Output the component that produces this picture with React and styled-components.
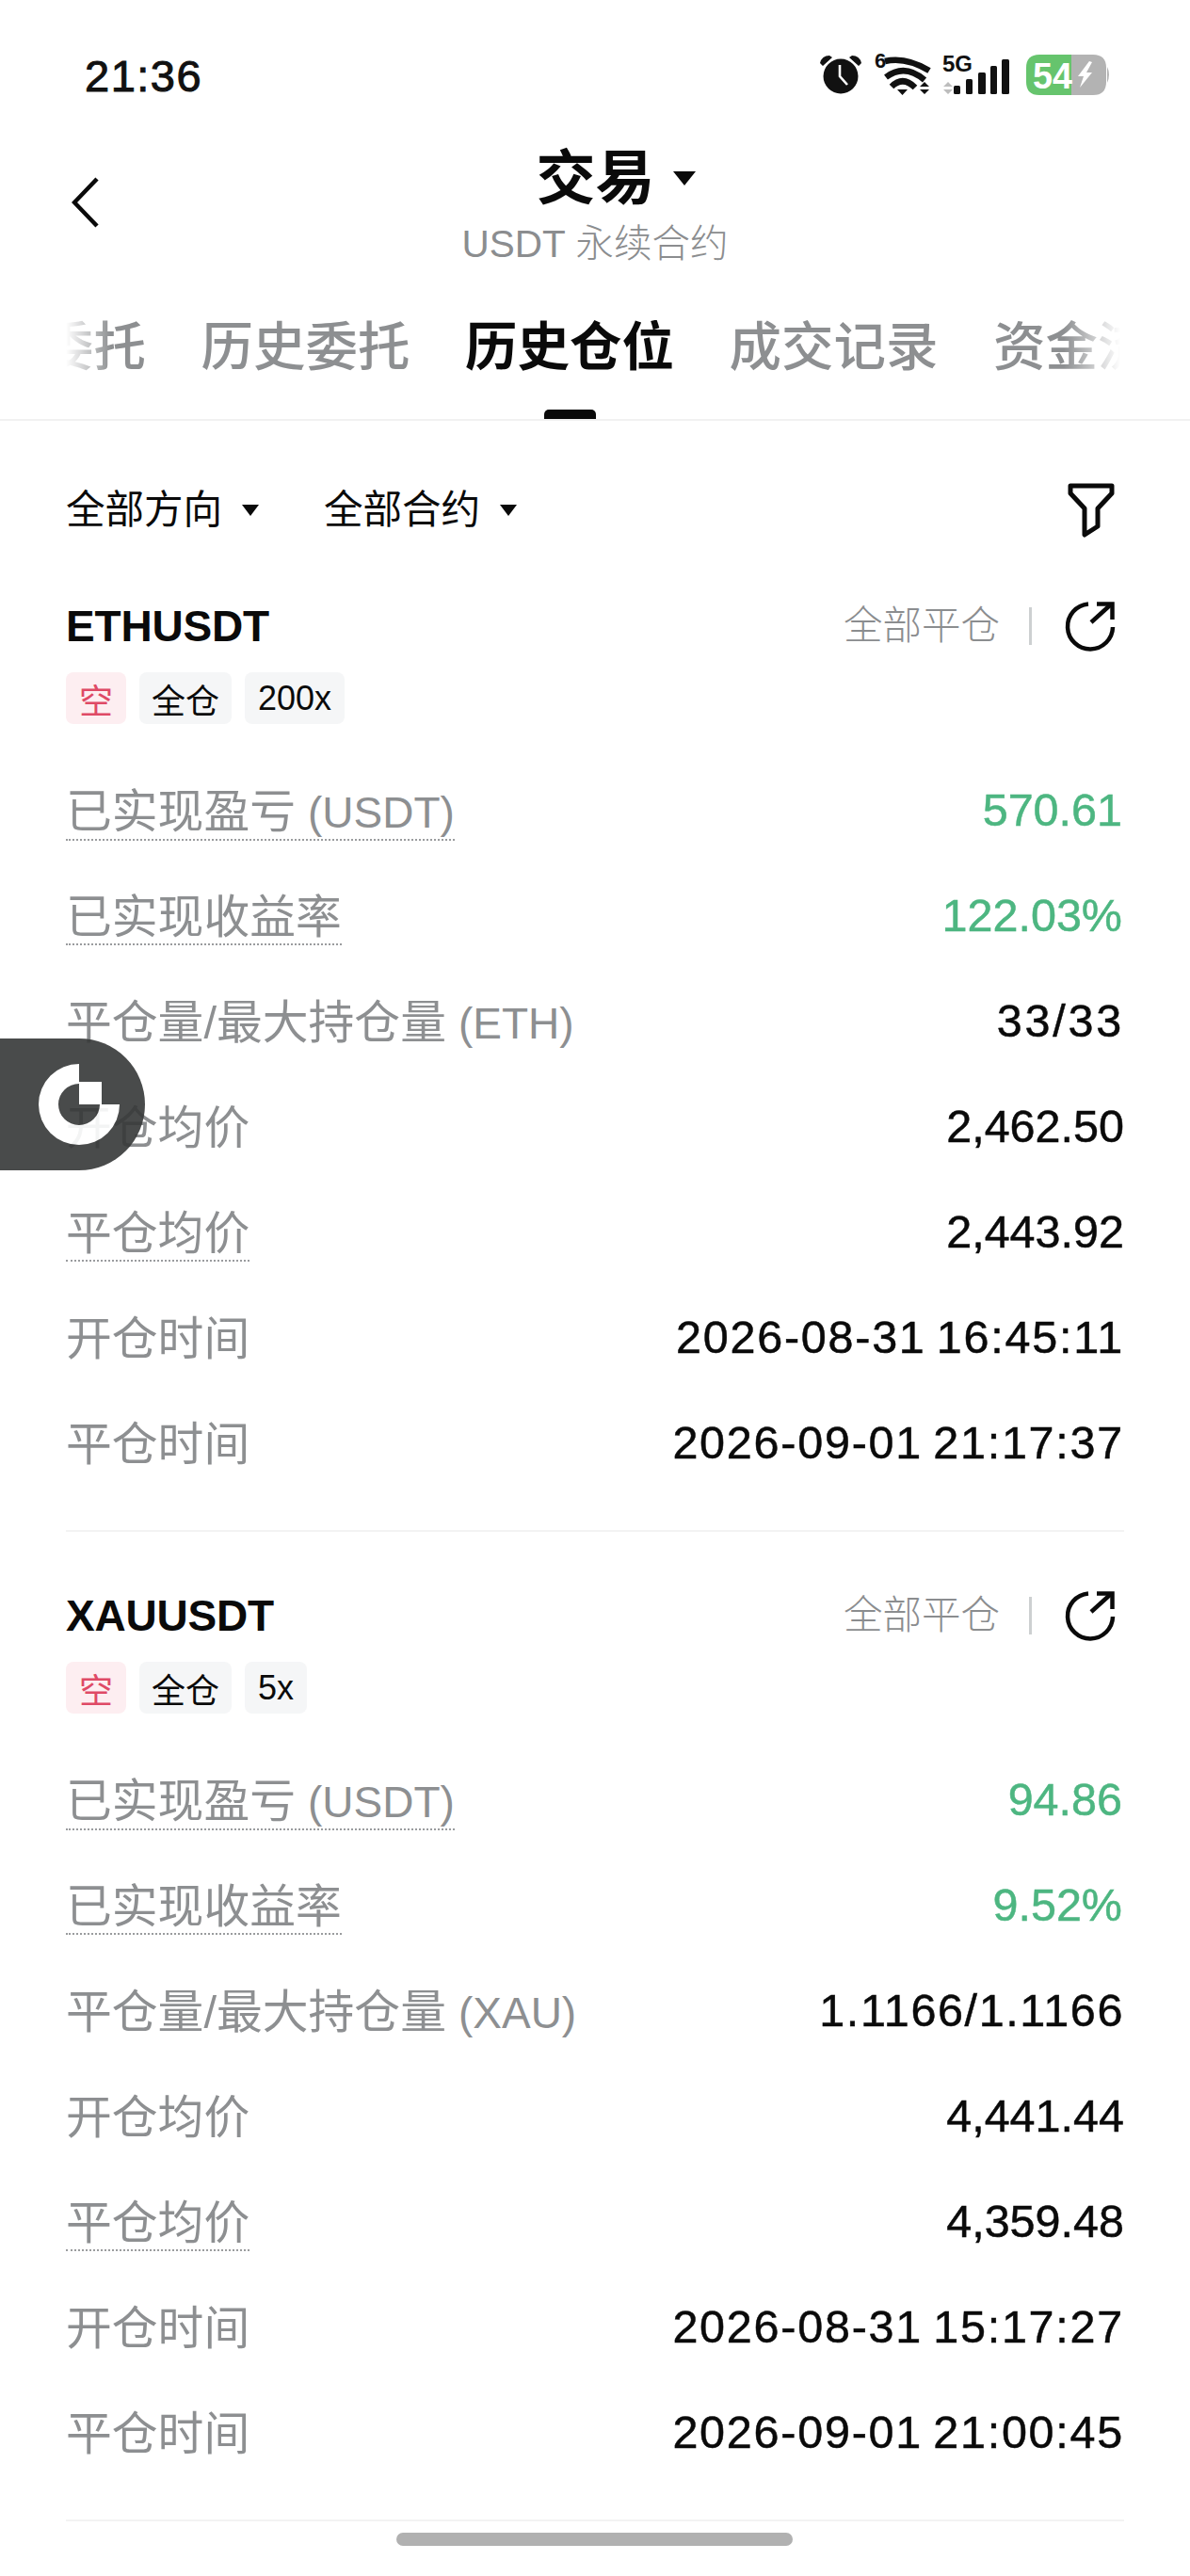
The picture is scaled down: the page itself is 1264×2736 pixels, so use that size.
import React from "react";
import styled, { createGlobalStyle } from "styled-components";

const Global = createGlobalStyle`
  html, body { margin: 0; padding: 0; background: #fff; }
  * { box-sizing: border-box; }
`;
const SANS = `"Liberation Sans", "Noto Sans CJK SC", sans-serif`;

const Page = styled.div`
  position: relative; width: 1264px; height: 2736px; overflow: hidden;
  background: #fff; font-family: ${SANS}; color: #0a0a0a;
`;
const StatusBar = styled.div`
  height: 162px; padding: 0 84px 0 90px; display: flex; align-items: center; justify-content: space-between;
`;
const Clock = styled.div`
  font-size: 47px; font-weight: 400; letter-spacing: 1.5px; color: #111; -webkit-text-stroke: 1px #111; margin-top: -1px;
`;
const StatusIcons = styled.svg`
  display: block; margin-top: -3px;
`;
const Header = styled.div`
  display: grid; grid-template-columns: 1fr auto 1fr; padding: 0 76px; height: 118px;
`;
const BackBtn = styled.svg`
  display: block; margin-top: 26px;
`;
const HeaderCenter = styled.div`
  display: flex; flex-direction: column; align-items: center; gap: 22px; padding-top: 1px;
`;
const TitleRow = styled.div`
  display: flex; align-items: center; gap: 19px; height: 52px; margin-left: 44px;
`;
const Title = styled.div`
  font-size: 63px; line-height: 52px; font-weight: 700;
`;
const Subtitle = styled.div`
  font-size: 40.5px; line-height: 44px; color: #8b8d8f; font-weight: 300;
`;
const Caret = styled.span`
  width: 0; height: 0; display: block;
  border-left: ${p => p.$s}px solid transparent; border-right: ${p => p.$s}px solid transparent;
  border-top: ${p => p.$h}px solid #0a0a0a;
`;
const TabsBar = styled.div`
  padding: 60px 74px 0 70px; height: 167px; border-bottom: 2px solid #f1f1f1;
`;
const TabsClip = styled.div`
  overflow: hidden; height: 105px;
  mask-image: linear-gradient(90deg, transparent 0, #000 48px, #000 1060px, transparent 1120px);
`;
const TabsTrack = styled.div`
  display: flex; gap: 58.5px; margin-left: -137px; width: 1600px;
`;
const Tab = styled.div`
  position: relative; height: 105px; font-size: 55.5px; line-height: 58px; white-space: nowrap;
  font-weight: ${p => (p.$active ? 700 : 500)}; color: ${p => (p.$active ? "#0a0a0a" : "#8d8f91")};
  ${p => p.$active && `
    &::after { content: ""; position: absolute; left: 84px; width: 55px; bottom: 0; height: 10px; background: #0a0a0a; border-radius: 5px 5px 0 0; }
  `}
`;
const FilterBar = styled.div`
  display: flex; align-items: center; padding: 66px 80px 5px 70px;
`;
const FilterItem = styled.div`
  display: flex; align-items: center; gap: 21px; font-size: 41.5px; line-height: 50px; margin-right: 69px; color: #0a0a0a;
`;
const FilterIcon = styled.svg`
  margin-left: auto; display: block;
`;
const Card = styled.section`
  margin: 0 70px; padding-top: 64px; border-bottom: 2px solid #f3f3f3; height: 1051px;
`;
const CardHead = styled.div`
  display: flex; align-items: center; justify-content: space-between; height: 50px;
`;
const Symbol = styled.div`
  font-size: 46px; line-height: 50px; font-weight: 700; letter-spacing: -.2px;
`;
const Actions = styled.div`
  display: flex; align-items: center; margin-right: 9px;
`;
const CloseAll = styled.div`
  font-size: 41.5px; line-height: 50px; color: #8b8d8f; font-weight: 300;
`;
const VLine = styled.div`
  width: 3px; height: 40px; background: #cdd0d1; margin: 0 35px 0 31px;
`;
const Tags = styled.div`
  display: flex; gap: 14px; margin-top: 24px;
`;
const Tag = styled.div`
  height: 55px; padding: 0 ${p => p.$pad}px; border-radius: 8px; display: flex; align-items: center;
  font-size: 36px; background: ${p => (p.$short ? "#fdeef1" : "#f5f6f7")}; color: ${p => (p.$short ? "#df4a66" : "#0a0a0a")};
`;
const Rows = styled.div`
  margin-top: 36px;
`;
const Row = styled.div`
  height: 112px; display: flex; align-items: center; justify-content: space-between;
`;
const Label = styled.div`
  font-size: 48.8px; line-height: 56px; color: #8d8f91; font-weight: 400; white-space: nowrap;
  border-bottom: 2px ${p => (p.$dotted ? "dotted #9a9c9e" : "solid transparent")};
  margin-top: 4px;
`;
const Unit = styled.span`
  font-size: 46px; margin-left: 13px;
`;
const Value = styled.div`
  font-size: 48.5px; white-space: nowrap; font-weight: 400; -webkit-text-stroke: .5px currentColor;
  color: ${p => (p.$green ? "#4db681" : "#0a0a0a")};
  letter-spacing: ${p => p.$sp || 0}px;
  word-spacing: ${p => p.$ws || 0}px;
  margin-right: ${p => (p.$green ? 2 : 0)}px;
  margin-bottom: 2px;
`;
const Float = styled.div`
  position: absolute; left: 0; top: 1103px; width: 154px; height: 140px; border-radius: 0 70px 70px 0;
  background: #363838; display: flex; align-items: center; padding-left: 41px; opacity: .9;
`;
const HomeBar = styled.div`
  position: absolute; left: 421px; top: 2690px; width: 421px; height: 14px; border-radius: 7px; background: #b1b1b1;
`;

const cards = [
  {
    sym: "ETHUSDT", lev: "200x", unit: "ETH", qtySp: 2.8,
    pnl: "570.61", rate: "122.03%", qty: "33/33", open: "2,462.50", close: "2,443.92",
    t1: "2026-08-31 16:45:11", t2: "2026-09-01 21:17:37",
  },
  {
    sym: "XAUUSDT", lev: "5x", unit: "XAU", qtySp: 1.6,
    pnl: "94.86", rate: "9.52%", qty: "1.1166/1.1166", open: "4,441.44", close: "4,359.48",
    t1: "2026-08-31 15:17:27", t2: "2026-09-01 21:00:45",
  },
];

const ShareIcon = () => (
  <svg width="54" height="54" viewBox="0 0 54 54" fill="none" stroke="#0a0a0a" strokeWidth="4.5">
    <path d="M25 3.5 A24 24 0 1 0 51 28" />
    <path d="M28 23 L49 4" />
    <path d="M34 3.5 H50.5 V20" />
  </svg>
);

const Status = () => (
  <StatusIcons width="310" height="48" viewBox="0 0 310 48">
    <g fill="#111">
      <circle cx="23" cy="25" r="18.5" />
      <path d="M1 11 Q3 3 11 3 L14 5 L4 14 Z M45 11 Q43 3 35 3 L32 5 L42 14 Z" />
    </g>
    <path d="M22 13 V25 L30 34" stroke="#fff" strokeWidth="2.6" fill="none" />
    <text x="59" y="16" fontSize="22" fontWeight="700" fill="#111" fontFamily="Liberation Sans">6</text>
    <g fill="none" stroke="#111" strokeWidth="6.5">
      <path d="M70 9 Q92 4 117 19" />
      <path d="M71 26 Q91 11 112 29" />
      <path d="M77 36 Q89 24 102 37" />
    </g>
    <path d="M83 39 H94 L88.5 45 Z M107 36 L112 31 L117 36 Z M107 39 H117 L112 44 Z" fill="#111" />
    <text x="131" y="20" fontSize="23" fontWeight="700" fill="#111" fontFamily="Liberation Sans" textLength="32" lengthAdjust="spacingAndGlyphs">5G</text>
    <path d="M132 36 L137 31 L142 36 Z M132 39 H142 L137 44 Z" fill="#bdbdbd" />
    <g fill="#111">
      <rect x="143" y="35" width="7" height="9" rx="1.5" />
      <rect x="156" y="28" width="7" height="16" rx="1.5" />
      <rect x="169" y="21" width="8" height="23" rx="1.5" />
      <rect x="182" y="14" width="7" height="30" rx="1.5" />
      <rect x="194" y="7" width="8" height="37" rx="1.5" />
    </g>
    <path d="M234 2 H268 V45 H234 Q220 45 220 31 V16 Q220 2 234 2 Z" fill="#66c46d" />
    <path d="M268 2 H291 Q305 2 305 16 V31 Q305 45 291 45 H268 Z" fill="#b3b3b3" />
    <path d="M306 15 Q310 23 306 32 Z" fill="#b3b3b3" />
    <text x="227" y="38" fontSize="39" fontWeight="700" fill="#fff" fontFamily="Liberation Sans" textLength="42" lengthAdjust="spacingAndGlyphs">54</text>
    <path d="M287 9 L275 25 H281 L277 37 L290 21 H284 L290 10 Z" fill="#fff" />
  </StatusIcons>
);

const Logo = () => (
  <svg width="86" height="86" viewBox="0 0 86 86">
    <path d="M43 0 A43 43 0 1 0 86 43 H65 A22 22 0 1 1 43 21 Z" fill="#fff" />
    <rect x="43" y="19" width="24" height="24" fill="#fff" />
  </svg>
);

export default function App() {
  return (
    <Page>
      <Global />
      <StatusBar>
        <Clock>21:36</Clock>
        <Status />
      </StatusBar>
      <Header>
        <BackBtn width="30" height="54" viewBox="0 0 30 54" fill="none" stroke="#0a0a0a" strokeWidth="4.5">
          <path d="M27 2 L3 27 L27 52" />
        </BackBtn>
        <HeaderCenter>
          <TitleRow>
            <Title>交易</Title>
            <Caret $s={12} $h={15} />
          </TitleRow>
          <Subtitle>USDT 永续合约</Subtitle>
        </HeaderCenter>
      </Header>
      <TabsBar>
        <TabsClip>
          <TabsTrack>
            {["当前委托", "历史委托", "历史仓位", "成交记录", "资金流水"].map(t => (
              <Tab key={t} $active={t === "历史仓位"}>{t}</Tab>
            ))}
          </TabsTrack>
        </TabsClip>
      </TabsBar>
      <FilterBar>
        <FilterItem>全部方向<Caret $s={9} $h={12} /></FilterItem>
        <FilterItem>全部合约<Caret $s={9} $h={12} /></FilterItem>
        <FilterIcon width="50" height="58" viewBox="0 0 50 58" fill="none" stroke="#0a0a0a" strokeWidth="5" strokeLinejoin="round">
          <path d="M3 3 H47 V11 L32 27 V46 L18 55 V27 L3 11 Z" />
        </FilterIcon>
      </FilterBar>
      {cards.map(c => (
        <Card key={c.sym}>
          <CardHead>
            <Symbol>{c.sym}</Symbol>
            <Actions>
              <CloseAll>全部平仓</CloseAll>
              <VLine />
              <ShareIcon />
            </Actions>
          </CardHead>
          <Tags>
            <Tag $short $pad={14}>空</Tag>
            <Tag $pad={13}>全仓</Tag>
            <Tag $pad={14}>{c.lev}</Tag>
          </Tags>
          <Rows>
            <Row><Label $dotted>已实现盈亏<Unit>(USDT)</Unit></Label><Value $green>{c.pnl}</Value></Row>
            <Row><Label $dotted>已实现收益率</Label><Value $green>{c.rate}</Value></Row>
            <Row><Label>平仓量/最大持仓量<Unit>({c.unit})</Unit></Label><Value $sp={c.qtySp}>{c.qty}</Value></Row>
            <Row><Label>开仓均价</Label><Value>{c.open}</Value></Row>
            <Row><Label $dotted>平仓均价</Label><Value>{c.close}</Value></Row>
            <Row><Label>开仓时间</Label><Value $sp={1.75} $ws={-4}>{c.t1}</Value></Row>
            <Row><Label>平仓时间</Label><Value $sp={1.75} $ws={-4}>{c.t2}</Value></Row>
          </Rows>
        </Card>
      ))}
      <Float><Logo /></Float>
      <HomeBar />
    </Page>
  );
}
